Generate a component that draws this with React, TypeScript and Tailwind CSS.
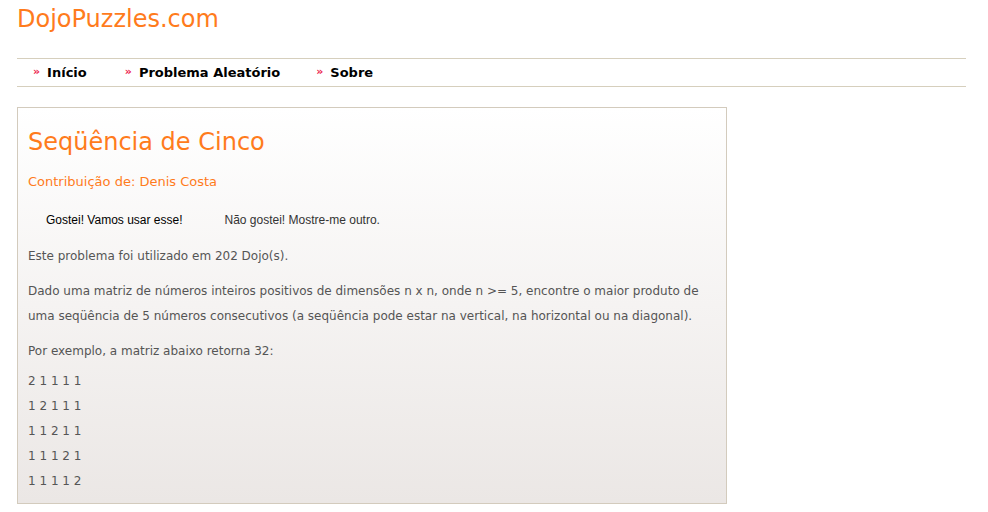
const NAV = ['Início', 'Problema Aleatório', 'Sobre']

const MATRIX = ['2 1 1 1 1', '1 2 1 1 1', '1 1 2 1 1', '1 1 1 2 1', '1 1 1 1 2']

export default function App() {
  return (
    <div className="min-h-screen bg-white px-[17px] pr-[22px] font-['DejaVu_Sans',Verdana,sans-serif]">
      {/* header */}
      <h1 className="pt-[4px] text-[24px] leading-[30px] text-[#ff7b1c]">DojoPuzzles.com</h1>

      {/* menu */}
      <nav className="mt-[24px] flex h-[29px] items-center border-y border-[#d6cfbd] pl-[16px] text-[13px] font-bold text-black">
        {NAV.map((item, i) => (
          <a key={item} href="#" className={`flex items-center ${i === 0 ? 'mr-[38px]' : 'mr-[36px]'}`}>
            <span className="mr-[7px] text-[11px] text-[#ec1b4b]">»</span>
            {item}
          </a>
        ))}
      </nav>

      {/* problem box */}
      <div className="mt-[20px] w-[710px] border border-[#d3cbbd] bg-gradient-to-b from-white to-[#ebe7e5] px-[10px] pt-[14px] pb-[9px] text-[12px] text-[#555]">
        <h2 className="text-[24px] leading-[40px] text-[#ff7b1c]">Seqüência de Cinco</h2>
        <p className="mt-[12px] text-[13px] leading-[16px] text-[#ff7b1c]">Contribuição de: Denis Costa</p>

        <div className="mt-[21px] flex gap-[42px] pl-[18px] font-['Liberation_Sans',Arial,sans-serif] text-[12px]">
          <button className="text-black">Gostei! Vamos usar esse!</button>
          <button className="text-[#333]">Não gostei! Mostre-me outro.</button>
        </div>

        <p className="mt-[15px] leading-[25px]">Este problema foi utilizado em 202 Dojo(s).</p>
        <p className="mt-[10px] leading-[25px]">
          Dado uma matriz de números inteiros positivos de dimensões n x n, onde n &gt;= 5, encontre o maior produto de uma
          seqüência de 5 números consecutivos (a seqüência pode estar na vertical, na horizontal ou na diagonal).
        </p>
        <p className="mt-[10px] leading-[25px]">Por exemplo, a matriz abaixo retorna 32:</p>
        <div className="mt-[5px]">
          {MATRIX.map((row, i) => (
            <p key={i} className="leading-[25px]">{row}</p>
          ))}
        </div>
      </div>
    </div>
  )
}
